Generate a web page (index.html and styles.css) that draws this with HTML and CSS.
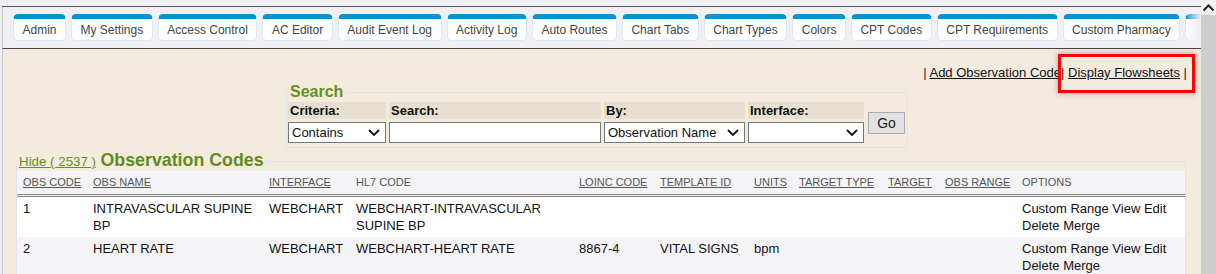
FILE: index.html
```html
<!DOCTYPE html>
<html lang="en">
<head>
    <meta charset="UTF-8">
    <title>Observation Codes</title>
    <link rel="stylesheet" href="styles.css">
</head>
<body>
    <div class="window">
        <div class="app">
            <div class="topstrip"></div>
            <nav class="tabs">
                <a class="tab">Admin</a>
                <a class="tab">My Settings</a>
                <a class="tab">Access Control</a>
                <a class="tab">AC Editor</a>
                <a class="tab">Audit Event Log</a>
                <a class="tab">Activity Log</a>
                <a class="tab">Auto Routes</a>
                <a class="tab">Chart Tabs</a>
                <a class="tab">Chart Types</a>
                <a class="tab">Colors</a>
                <a class="tab">CPT Codes</a>
                <a class="tab">CPT Requirements</a>
                <a class="tab">Custom Pharmacy</a>
                <a class="tab tab-more"></a>
            </nav>
            <main class="content">
                <div class="actions">| <a href="#">Add Observation Code</a>| <a href="#">Display Flowsheets</a> |</div>

                <fieldset class="search">
                    <legend>Search</legend>
                    <div class="search-grid">
                        <div class="label">Criteria:</div>
                        <div class="label">Search:</div>
                        <div class="label">By:</div>
                        <div class="label">Interface:</div>
                        <button class="go" type="button">Go</button>

                        <div class="select-wrap">
                            <select><option>Contains</option></select>
                            <svg class="chev" width="12" height="7" viewBox="0 0 12 7"><polyline points="1,1 6,6 11,1" fill="none" stroke="#111" stroke-width="1.8"/></svg>
                        </div>
                        <input class="text" type="text">
                        <div class="select-wrap">
                            <select><option>Observation Name</option></select>
                            <svg class="chev" width="12" height="7" viewBox="0 0 12 7"><polyline points="1,1 6,6 11,1" fill="none" stroke="#111" stroke-width="1.8"/></svg>
                        </div>
                        <div class="select-wrap">
                            <select><option></option></select>
                            <svg class="chev" width="12" height="7" viewBox="0 0 12 7"><polyline points="1,1 6,6 11,1" fill="none" stroke="#111" stroke-width="1.8"/></svg>
                        </div>
                    </div>
                </fieldset>

                <fieldset class="codes">
                    <legend><a class="hide" href="#">Hide ( 2537 )</a> <span class="title">Observation Codes</span></legend>
                    <table class="grid">
                        <colgroup>
                            <col style="width:70px"><col style="width:176px"><col style="width:87px">
                            <col style="width:223px"><col style="width:81px"><col style="width:94px">
                            <col style="width:45px"><col style="width:89px"><col style="width:57px">
                            <col style="width:77px"><col>
                        </colgroup>
                        <thead>
                            <tr>
                                <th><a href="#">Obs Code</a></th>
                                <th><a href="#">Obs Name</a></th>
                                <th><a href="#">Interface</a></th>
                                <th>HL7 Code</th>
                                <th><a href="#">Loinc Code</a></th>
                                <th><a href="#">Template ID</a></th>
                                <th><a href="#">Units</a></th>
                                <th><a href="#">Target Type</a></th>
                                <th><a href="#">Target</a></th>
                                <th><a href="#">Obs Range</a></th>
                                <th>Options</th>
                            </tr>
                        </thead>
                        <tbody>
                            <tr>
                                <td>1</td>
                                <td>INTRAVASCULAR SUPINE BP</td>
                                <td>WEBCHART</td>
                                <td>WEBCHART-INTRAVASCULAR SUPINE BP</td>
                                <td></td>
                                <td></td>
                                <td></td>
                                <td></td>
                                <td></td>
                                <td></td>
                                <td>Custom Range View Edit Delete Merge</td>
                            </tr>
                            <tr class="alt">
                                <td>2</td>
                                <td>HEART RATE</td>
                                <td>WEBCHART</td>
                                <td>WEBCHART-HEART RATE</td>
                                <td>8867-4</td>
                                <td>VITAL SIGNS</td>
                                <td>bpm</td>
                                <td></td>
                                <td></td>
                                <td></td>
                                <td>Custom Range View Edit Delete Merge</td>
                            </tr>
                        </tbody>
                    </table>
                </fieldset>
            </main>
            <!-- annotation around the flowsheets link -->
            <div class="highlight"></div>
        </div>
        <div class="scrollbar">
            <div class="arrow">
                <svg width="15" height="12" viewBox="0 0 15 12"><polyline points="2.5,8.5 7.5,3.5 12.5,8.5" fill="none" stroke="#222" stroke-width="2"/></svg>
            </div>
        </div>
    </div>
</body>
</html>
```

FILE: styles.css
```css
body {
    margin: 0;
    font-family: "Liberation Sans", Arial, sans-serif;
    background-color: #efeff4;
    height: 274px;
    overflow: hidden;
}

.window {
    display: flex;
    height: 274px;
    overflow: hidden;
}

.app {
    position: relative;
    flex: 1;
    display: flex;
    flex-direction: column;
    padding-left: 2px;
}

.topstrip {
    flex: none;
    height: 6px;
    border-bottom: 1px solid #555;
}

.tabs {
    position: relative;
    flex: none;
    display: flex;
    gap: 5px;
    height: 42px;
    padding: 7px 0 0 10px;
    box-sizing: border-box;
    overflow: hidden;
    border-bottom: 1px solid #444;
    border-left: 1px solid #c6c6cc;
}

.tabs::after {
    content: "";
    position: absolute;
    right: 0;
    top: 0;
    width: 14px;
    height: 100%;
    background: linear-gradient(to right, rgba(239, 239, 244, 0.2), #efeff4);
}

.tab {
    flex: none;
    height: 27px;
    box-sizing: border-box;
    padding: 1px 8.5px 0;
    background-color: white;
    border: 1px solid #d8e9f5;
    border-top: 5px solid #0094d9;
    border-radius: 5px;
    font-size: 12px;
    line-height: 20px;
    color: #444;
}

.tab-more {
    width: 60px;
}

.content {
    flex: none;
    background-color: #f3ecde;
    border-left: 1px solid #c6c6cc;
    padding-top: 16px;
}

.actions {
    text-align: right;
    font-size: 13px;
    line-height: 15px;
    padding-right: 14px;
    color: #222;
}

.actions a {
    color: #111;
}

fieldset {
    margin: 0;
    border: 1px solid #e2e2ea;
    min-inline-size: 0;
}

.search {
    width: fit-content;
    margin: 3px 0 0 283px;
    padding: 1px 2px 4px 1px;
}

.search legend {
    padding: 0 2px;
    font-size: 16px;
    line-height: 18px;
    font-weight: bold;
    color: #66901f;
}

.search-grid {
    display: grid;
    grid-template-columns: 98px 212px 141px 116px 38px;
    grid-template-rows: 17px 21px;
    column-gap: 3px;
    row-gap: 3px;
}

.label {
    background-color: #e7e0d1;
    font-size: 13px;
    font-weight: bold;
    line-height: 17px;
    padding-left: 2px;
    color: #111;
}

.go {
    grid-column: 5;
    grid-row: 1 / 3;
    align-self: center;
    margin-left: 1px;
    height: 22px;
    padding: 0;
    background-color: #e1e1e1;
    border: 1px solid #adadad;
    font-family: inherit;
    font-size: 14px;
    color: #222;
}

.select-wrap {
    position: relative;
}

.select-wrap select {
    appearance: none;
    -webkit-appearance: none;
    width: 100%;
    height: 21px;
    margin: 0;
    padding: 0 0 0 3px;
    background-color: white;
    border: 1px solid #767676;
    border-radius: 0;
    font-family: inherit;
    font-size: 13px;
    color: #111;
}

.chev {
    position: absolute;
    right: 6px;
    top: 7px;
    pointer-events: none;
}

.text {
    height: 21px;
    margin: 0;
    padding: 0 3px;
    box-sizing: border-box;
    background-color: white;
    border: 1px solid #767676;
}

.codes {
    margin: 3px 15px 0 13px;
    padding: 0;
}

.codes legend {
    padding: 0 3px 0 2px;
    line-height: 19px;
}

.hide {
    font-size: 13.33px;
    color: #66901f;
}

.title {
    font-size: 17.8px;
    font-weight: bold;
    color: #5f8c1c;
}

.grid {
    width: 100%;
    table-layout: fixed;
    border-collapse: collapse;
    background-color: white;
}

.grid th {
    background-color: #f4f4f7;
    text-align: left;
    font-weight: normal;
    font-size: 11px;
    line-height: 13px;
    text-transform: uppercase;
    color: #555;
    padding: 5px 6px;
    border-bottom: 3px double #888;
    white-space: nowrap;
}

.grid th a {
    color: #555;
}

.grid td {
    font-size: 13px;
    line-height: 17px;
    color: #111;
    padding: 3px 6px;
    vertical-align: top;
}

.grid tr.alt td {
    background-color: #f4f4f7;
}

.highlight {
    position: absolute;
    left: 1058px;
    top: 54px;
    width: 131px;
    height: 33px;
    border: 3px solid #f00;
    box-shadow: 0 0 6px rgba(0, 0, 0, 0.35);
}

.scrollbar {
    width: 15px;
    background-color: #cdcdcd;
}

.arrow {
    height: 15px;
    background-color: #f0f0f0;
}
```
